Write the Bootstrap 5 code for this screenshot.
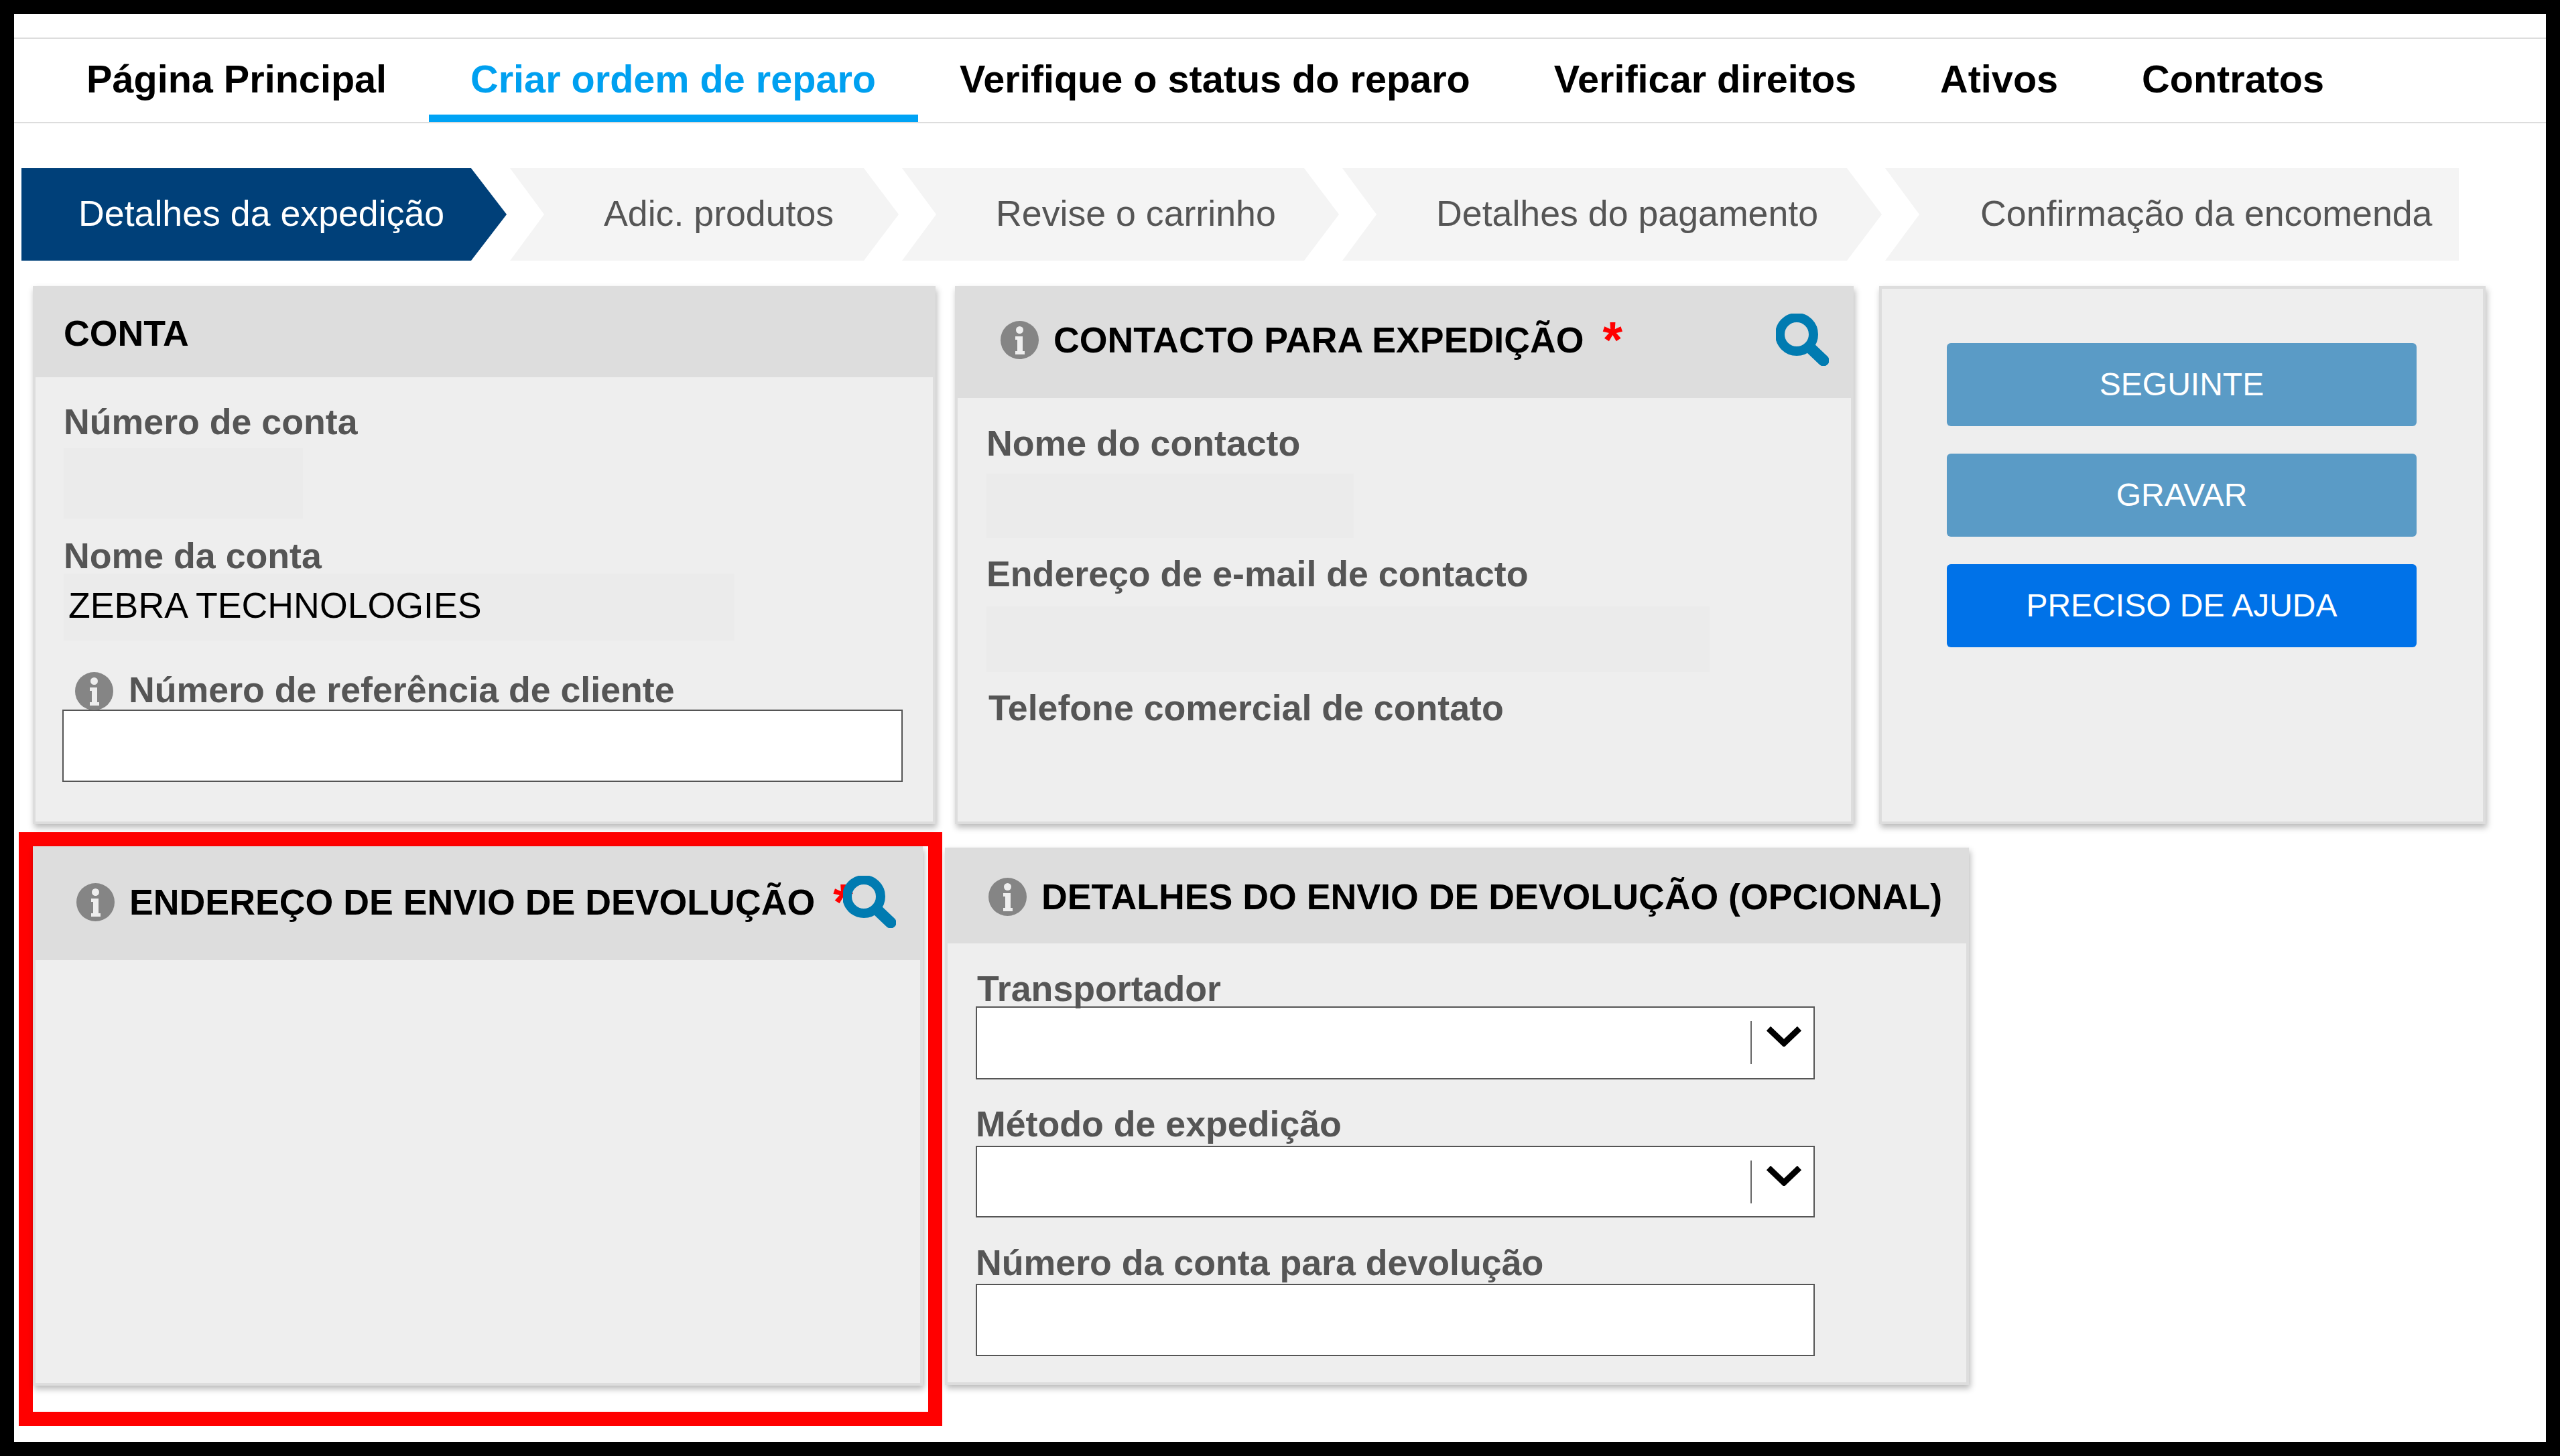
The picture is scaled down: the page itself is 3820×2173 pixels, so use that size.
<!doctype html>
<html lang="pt">
<head>
<meta charset="utf-8">
<title>Criar ordem de reparo</title>
<link href="https://cdn.jsdelivr.net/npm/bootstrap@5.3.0/dist/css/bootstrap.min.css" rel="stylesheet">
<style>
html,body{margin:0;background:#fff;}
body{font-family:"Liberation Sans",Arial,sans-serif;}
.frame{width:3820px;height:2173px;border:21px solid #000;overflow:hidden;background:#fff;}
.topnav{margin-top:35px;height:128px;border-top:2px solid #ddd;border-bottom:2px solid #ddd;padding-left:45.5px;flex-wrap:nowrap;}
.topnav .nav-link{font-size:57.6px;font-weight:700;color:#000;line-height:64px;padding:28px 62.5px 0;height:124px;white-space:nowrap;}
.topnav .nav-link.active{color:#00a0f0;border-bottom:11px solid #00a3f5;margin-bottom:0;}
.steps{margin-top:67px;margin-left:11px;gap:5px;height:138px;}
.stepitem{height:138px;background:#f4f4f4;color:#555;font-size:53.7px;line-height:134px;white-space:nowrap;padding-left:140px;clip-path:polygon(0 0,calc(100% - 52px) 0,100% 50%,calc(100% - 52px) 100%,0 100%,51px 50%);}
.stepitem.on{background:#004079;color:#fff;padding-left:85px;clip-path:polygon(0 0,calc(100% - 53px) 0,100% 50%,calc(100% - 53px) 100%,0 100%);}
.w1{width:724px}.w2{width:580px}.w3{width:652px}.w4{width:805px}
.stepitem.w5{width:856px;padding-left:142px;clip-path:polygon(0 0,100% 0,100% 100%,0 100%,51px 50%);}
.rowone{margin-top:38px;margin-left:28px;}
.panel{background:#eee;border:4px solid #ddd;border-radius:0;box-shadow:2px 5px 9px rgba(0,0,0,.28);}
.panel .card-header{background:#ddd;border:0;border-radius:0;padding:0;color:#000;font-size:53.7px;font-weight:700;line-height:60px;white-space:nowrap;}
.panel .card-body{padding:0;}
.p-conta{width:1347px;height:803px;}
.p-conta .card-header{height:132px;padding:0 0 0 42px;}
.p-conta .card-body{padding:38px 0 0 42px;}
.p-contact{width:1341px;height:803px;margin-left:29px;}
.p-contact .card-header{height:163px;padding:0 0 11px 64px;}
.p-contact .card-body{padding:39px 0 0 43px;}
.p-actions{width:905px;height:803px;margin-left:38px;padding:81px 0 0 97px;}
.fieldlabel{font-size:53.7px;font-weight:700;color:#555;line-height:56px;height:60px;white-space:nowrap;}
.hidden-val{background:#ebebeb;}
.hv1{width:357px;height:105px;margin-top:8px;margin-bottom:27px;}
.hv2{width:1001px;height:100px;margin-top:-5px;margin-bottom:45px;padding:22px 0 0 7px;font-size:53.7px;line-height:50px;color:#000;}
.hv3{width:548px;height:96px;margin-top:14px;margin-bottom:25px;}
.hv4{width:1079px;height:98px;margin-top:17px;margin-bottom:25px;}
.nudge3{margin-left:3px;}
.infoicon{width:57px;height:57px;flex:none;}
.reflabel{margin-left:17px;gap:23px;}
.reflabel-text{margin-top:-4px;}
.boxfield{border:2px solid #555;border-radius:0;background:#fff;padding:0;}
.boxfield:focus{box-shadow:none;border-color:#555;}
.in-ref{width:1254px;height:108px;margin:-2px 0 0 -2px;}
.title-gap{margin-left:22px;}
.star{color:#f00;font-size:76px;font-weight:700;line-height:60px;margin-left:28px;height:60px;}
.mag{width:79px;height:78px;flex:none;}
.p-contact .mag{margin-left:auto;margin-right:33px;}
.act-btn{display:block;width:701px;height:124px;font-size:48px;line-height:124px;padding:0;border:0;border-radius:6px;color:#fff;margin-bottom:41px;}
.act-soft,.act-soft:hover{background:#5a9bc6;color:#fff;}
.act-strong,.act-strong:hover{background:#0072e8;color:#fff;}
.rowtwo{margin-top:12px;margin-left:7px;}
.redbox{border:21px solid #f00;width:1378px;height:886px;flex:none;}
.p-return{width:1328px;height:805px;}
.p-return .card-header{height:166px;padding:0 0 8px 61px;}
.p-details{width:1528px;height:802px;margin:23px 0 0 4px;}
.p-details .card-header{height:139px;padding:0 0 1px 61px;}
.p-details .card-body{padding:0 0 0 42px;}
.star-under{margin-left:27px;width:32px;flex:none;font-size:76px;font-weight:700;color:#f00;height:60px;line-height:60px;}
.p-return .mag{margin-left:-17px;position:relative;}
.lab-a{margin:39px 0 -5px 2px;}
.lab-b{margin:38px 0 1px 0;}
.lab-c{margin:39px 0 0 0;}
.selectbox{width:1252px;height:109px;border:2px solid #555;background:#fff;justify-content:flex-end;}
.selectbox2{height:107px;}
.sel-div{width:2px;height:64px;background:#666;margin:20px 20px 0 0;}
.sel-chev{width:56px;height:30px;margin:28px 16px 0 0;}
.in-ret{width:1252px;height:108px;}
</style>
</head>
<body>
<svg width="0" height="0" class="d-block" aria-hidden="true">
  <defs>
    <symbol id="i-info" viewBox="0 0 57 57"><circle cx="28.5" cy="28.5" r="28.5" fill="#858585"/><circle cx="28.5" cy="13.5" r="5.5" fill="#eee"/><path d="M22 23h11v22h3v5H22v-5h3V28h-3z" fill="#eee"/></symbol>
    <symbol id="i-mag" viewBox="0 0 79 78"><circle cx="31" cy="31" r="25" fill="none" stroke="#007bb1" stroke-width="14"/><path d="M51 51l20 19" stroke="#007bb1" stroke-width="17" stroke-linecap="round" fill="none"/></symbol>
    <symbol id="i-chev" viewBox="0 0 56 30"><path d="M5 3l23 22L51 3" fill="none" stroke="#000" stroke-width="9"/></symbol>
  </defs>
</svg>
<div class="frame">
  <ul class="nav topnav">
    <li class="nav-item"><a class="nav-link" href="#">Página Principal</a></li>
    <li class="nav-item"><a class="nav-link active" href="#">Criar ordem de reparo</a></li>
    <li class="nav-item"><a class="nav-link" href="#">Verifique o status do reparo</a></li>
    <li class="nav-item"><a class="nav-link" href="#">Verificar direitos</a></li>
    <li class="nav-item"><a class="nav-link" href="#">Ativos</a></li>
    <li class="nav-item"><a class="nav-link" href="#">Contratos</a></li>
  </ul>

  <div class="d-flex steps">
    <div class="stepitem on w1">Detalhes da expedição</div>
    <div class="stepitem w2">Adic. produtos</div>
    <div class="stepitem w3">Revise o carrinho</div>
    <div class="stepitem w4">Detalhes do pagamento</div>
    <div class="stepitem w5">Confirmação da encomenda</div>
  </div>

  <div class="d-flex rowone">
    <div class="card panel p-conta">
      <div class="card-header d-flex align-items-center">CONTA</div>
      <div class="card-body">
        <div class="fieldlabel">Número de conta</div>
        <div class="hidden-val hv1"></div>
        <div class="fieldlabel">Nome da conta</div>
        <div class="hidden-val hv2">ZEBRA TECHNOLOGIES</div>
        <div class="d-flex align-items-center fieldlabel reflabel"><svg class="infoicon"><use href="#i-info"/></svg><span class="reflabel-text">Número de referência de cliente</span></div>
        <input class="form-control boxfield in-ref" type="text" aria-label="Número de referência de cliente">
      </div>
    </div>

    <div class="card panel p-contact">
      <div class="card-header d-flex align-items-center">
        <svg class="infoicon"><use href="#i-info"/></svg>
        <span class="title-gap">CONTACTO PARA EXPEDIÇÃO</span>
        <span class="star">*</span>
        <svg class="mag"><use href="#i-mag"/></svg>
      </div>
      <div class="card-body">
        <div class="fieldlabel">Nome do contacto</div>
        <div class="hidden-val hv3"></div>
        <div class="fieldlabel">Endereço de e-mail de contacto</div>
        <div class="hidden-val hv4"></div>
        <div class="fieldlabel nudge3">Telefone comercial de contato</div>
      </div>
    </div>

    <div class="card panel p-actions">
      <button type="button" class="btn act-btn act-soft">SEGUINTE</button>
      <button type="button" class="btn act-btn act-soft">GRAVAR</button>
      <button type="button" class="btn act-btn act-strong">PRECISO DE AJUDA</button>
    </div>
  </div>

  <div class="d-flex rowtwo">
    <div class="redbox">
      <div class="card panel p-return">
        <div class="card-header d-flex align-items-center">
          <svg class="infoicon"><use href="#i-info"/></svg>
          <span class="title-gap">ENDEREÇO DE ENVIO DE DEVOLUÇÃO</span>
          <span class="star-under">*</span>
          <svg class="mag"><use href="#i-mag"/></svg>
        </div>
        <div class="card-body"></div>
      </div>
    </div>
    <div class="card panel p-details">
      <div class="card-header d-flex align-items-center">
        <svg class="infoicon"><use href="#i-info"/></svg>
        <span class="title-gap">DETALHES DO ENVIO DE DEVOLUÇÃO (OPCIONAL)</span>
      </div>
      <div class="card-body">
        <div class="fieldlabel lab-a">Transportador</div>
        <div class="d-flex selectbox"><span class="sel-div"></span><svg class="sel-chev"><use href="#i-chev"/></svg></div>
        <div class="fieldlabel lab-b">Método de expedição</div>
        <div class="d-flex selectbox selectbox2"><span class="sel-div"></span><svg class="sel-chev"><use href="#i-chev"/></svg></div>
        <div class="fieldlabel lab-c">Número da conta para devolução</div>
        <input class="form-control boxfield in-ret" type="text" aria-label="Número da conta para devolução">
      </div>
    </div>
  </div>
</div>
<script src="https://cdn.jsdelivr.net/npm/bootstrap@5.3.0/dist/js/bootstrap.bundle.min.js"></script>
</body>
</html>
